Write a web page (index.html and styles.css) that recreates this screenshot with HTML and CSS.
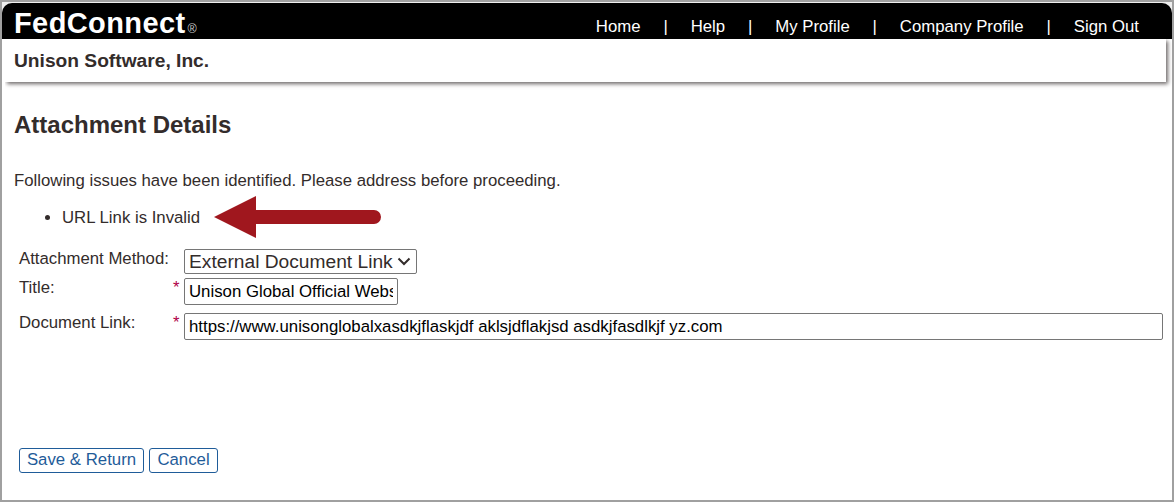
FILE: index.html
```html
<!DOCTYPE html>
<html lang="en">
<head>
    <meta charset="UTF-8">
    <meta name="viewport" content="width=device-width, initial-scale=1.0">
    <title>FedConnect - Attachment Details</title>
    <link rel="stylesheet" href="styles.css">
</head>
<body>
    <div class="page">
        <div class="header">
            <div class="logo">FedConnect<span class="reg">®</span></div>
            <div class="menu">
                <a>Home</a>
                <span>|</span>
                <a>Help</a>
                <span>|</span>
                <a>My Profile</a>
                <span>|</span>
                <a>Company Profile</a>
                <span>|</span>
                <a>Sign Out</a>
            </div>
        </div>
        <div class="company">Unison Software, Inc.</div>

        <div class="content">
            <h1>Attachment Details</h1>
            <p class="message">Following issues have been identified. Please address before proceeding.</p>
            <div class="issues">
                <ul>
                    <li>URL Link is Invalid</li>
                </ul>
                <svg class="arrow" width="168" height="42" viewBox="0 0 168 42">
                    <path d="M0 21 L42 0 V14 H160 a7 7 0 0 1 0 14 H42 V42 Z" fill="#a0171e"/>
                </svg>
            </div>

            <form class="details">
                <div class="row row-method">
                    <label for="method">Attachment Method:</label>
                    <span class="required"></span>
                    <div class="select-box">
                        <select id="method">
                            <option>External Document Link</option>
                        </select>
                        <svg class="chevron" width="14" height="9" viewBox="0 0 14 9">
                            <path d="M1.5 1.5 L7 7 L12.5 1.5" fill="none" stroke="#332c2b" stroke-width="2"/>
                        </svg>
                    </div>
                </div>
                <div class="row row-title">
                    <label for="title">Title:</label>
                    <span class="required">*</span>
                    <input type="text" id="title" value="Unison Global Official Website">
                </div>
                <div class="row row-link">
                    <label for="link">Document Link:</label>
                    <span class="required">*</span>
                    <input type="text" id="link" value="https://www.unisonglobalxasdkjflaskjdf aklsjdflakjsd asdkjfasdlkjf yz.com">
                </div>
                <div class="buttons">
                    <button type="button" class="save">Save &amp; Return</button>
                    <button type="button" class="cancel">Cancel</button>
                </div>
            </form>
        </div>
    </div>
</body>
</html>
```
FILE: styles.css
```css
* {
    box-sizing: border-box;
}

body {
    margin: 0;
    font-family: "Liberation Sans", Arial, sans-serif;
    font-size: 16.75px;
    line-height: 20px;
    color: #332c2b;
    background-color: #fff;
}

.page {
    height: 502px;
    border: 2px solid #a0a0a0;
    padding-top: 1px;
    overflow: hidden;
    /* light strip behind the rounded header corners */
    background: linear-gradient(#eee, #eee) no-repeat top / 100% 12px;
}

.header {
    display: flex;
    justify-content: space-between;
    height: 36px;
    background-color: #000;
    border-radius: 10px 10px 0 0;
    padding: 0 33px 0 12px;
    color: #fff;
}

.logo {
    font-size: 29px;
    font-weight: bold;
    line-height: 40px;
    letter-spacing: 0.4px;
    white-space: nowrap;
}

.reg {
    font-size: 12.5px;
    font-weight: normal;
    color: #ccc;
    margin-left: 2px;
}

.menu {
    display: flex;
    gap: 22.9px;
    padding-top: 14px;
}

.company {
    height: 43px;
    margin: 0 6px 0 3px;
    padding: 12px 9px;
    font-size: 19.2px;
    font-weight: bold;
    background-color: #fff;
    box-shadow: 2px 2px 4px #6f6a6a;
    clip-path: inset(0 -8px -8px 0);
}

.content {
    padding: 0 7px 0 12px;
}

h1 {
    margin: 29px 0 0;
    font-size: 24px;
    line-height: 28px;
}

.message {
    margin: 32px 0 0;
}

.issues {
    display: flex;
    align-items: center;
    gap: 14px;
    height: 42px;
    margin-top: 5px;
}

.issues ul {
    margin: 0;
    padding: 1px 0 0 48px;
}

.row {
    display: flex;
    align-items: flex-start;
    padding-left: 5px;
}

.row label {
    width: 154px;
}

.required {
    width: 11px;
    color: #b0004a;
}

.row-method {
    margin-top: 11px;
}

.row-title {
    margin-top: 4px;
}

.row-link {
    margin-top: 8px;
    padding-right: 2px;
}

.select-box {
    position: relative;
}

select {
    display: block;
    appearance: none;
    width: 233px;
    height: 25px;
    padding: 0 4px;
    border: 1px solid #767676;
    border-radius: 2px;
    background-color: #fff;
    font-family: inherit;
    font-size: 19.2px;
    color: #332c2b;
}

.chevron {
    position: absolute;
    right: 6px;
    top: 8px;
}

input {
    height: 27px;
    padding: 0 4px;
    border: 1px solid #767676;
    border-radius: 2px;
    font-family: inherit;
    font-size: 16.8px;
    color: #000;
}

#title {
    width: 214px;
}

#link {
    flex: 1;
}

.buttons {
    display: flex;
    gap: 5px;
    margin-top: 108px;
    padding-left: 5px;
}

button {
    height: 25px;
    padding: 0 0 2px;
    border: 1px solid #1f5c99;
    border-radius: 3px;
    background-color: #fff;
    font-family: inherit;
    font-size: 16.8px;
    color: #1f5c99;
}

.save {
    width: 125px;
}

.cancel {
    width: 69px;
}
```
